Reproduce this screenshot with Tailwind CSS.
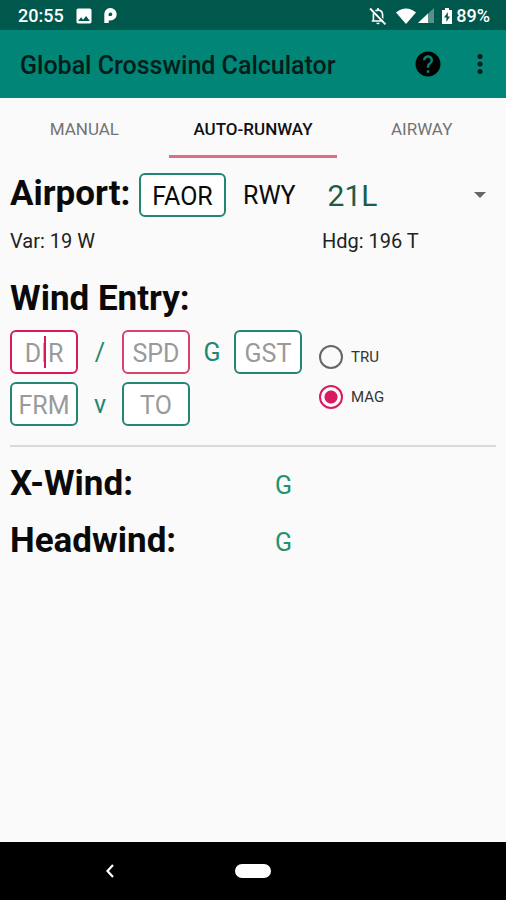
<!DOCTYPE html>
<html lang="en">
<head>
<meta charset="utf-8">
<meta name="viewport" content="width=device-width, initial-scale=1">
<title>Global Crosswind Calculator</title>
<script src="https://cdn.jsdelivr.net/npm/@tailwindcss/browser@4"></script>
</head>
<body class="min-h-screen flex flex-col bg-[#fafafa] text-[#0a0a0a] font-['Roboto',sans-serif]">
  <div class="h-[30px] shrink-0 bg-[#00574b] text-white flex items-center pl-[18px] pr-4 pt-0.5 text-lg font-medium">
    <span>20:55</span>
    <svg class="ml-2.5 size-5" viewBox="0 0 24 24" fill="currentColor" aria-hidden="true"><path d="M21 19V5c0-1.100-.9-2-2-2H5c-1.100 0-2 .9-2 2v14c0 1.100.9 2 2 2h14c1.100 0 2-.9 2-2zM8.500 13.500l2.500 3 3.500-4.500 4.500 6H5l3.500-4.500z"/></svg>
    <svg class="ml-2.5 h-4 w-[13px]" viewBox="0 0 13 16" aria-hidden="true"><path d="M2.500 15V6.500A4 4 0 1 1 6.500 10.200H4" fill="none" stroke="currentColor" stroke-width="4.400"/></svg>
    <svg class="ml-auto size-5" viewBox="0 0 24 24" aria-hidden="true"><path d="M6.500 18.500V10.500c0-3 2-5 5.500-5.500s5.500 2.500 5.500 5.500v8M4.500 18h14M12 2.500v3" fill="none" stroke="currentColor" stroke-width="2"/><path d="M10 20h4a2 2 0 0 1-4 0z" fill="currentColor"/><path d="M4.500 2.500l18 19" stroke="#00574b" stroke-width="2"/><path d="M2.500 3l18.500 19" stroke="currentColor" stroke-width="2.200"/></svg>
    <svg class="ml-2 h-4 w-5" viewBox="0 0 20 16" fill="currentColor" aria-hidden="true"><path d="M0 4.500Q10-3.500 20 4.500L10 16z"/></svg>
    <svg class="ml-0.5 size-4" viewBox="0 0 16 16" fill="currentColor" aria-hidden="true"><path d="M16 0v15H0z" opacity=".35"/><path d="M10 5.600V15H0z"/></svg>
    <svg class="ml-2 h-4 w-2.5" viewBox="0 0 10 16" aria-hidden="true"><path d="M3 0h4v2h3v14H0V2h3z" fill="currentColor"/><path d="M5.800 4L2 9.500h2.400V14L8 8.500H5.800z" fill="#00574b"/></svg>
    <span class="ml-1">89%</span>
  </div>

  <header class="h-[68px] shrink-0 bg-[#008577] flex items-center pl-5 pr-3.5 pt-1">
    <h1 class="text-[25px] font-medium text-[#001d19]">Global Crosswind Calculator</h1>
    <button type="button" aria-label="Help" class="ml-auto -mt-1"><svg class="size-[30px]" viewBox="0 0 24 24" aria-hidden="true"><path fill="#000" d="M12 2C6.480 2 2 6.480 2 12s4.480 10 10 10 10-4.480 10-10S17.520 2 12 2zm1 17h-2v-2h2v2zm2.070-7.750l-.9.920C13.450 12.900 13 13.500 13 15h-2v-.5c0-1.100.45-2.100 1.170-2.830l1.240-1.260c.37-.36.59-.86.59-1.410 0-1.100-.9-2-2-2s-2 .9-2 2H8c0-2.210 1.790-4 4-4s4 1.790 4 4c0 .88-.36 1.680-.93 2.250z"/></svg></button>
    <button type="button" aria-label="More options" class="ml-[25px] -mt-1"><svg class="h-6 w-6" viewBox="0 0 24 24" fill="#001d19" aria-hidden="true"><circle cx="12" cy="4.500" r="2.500"/><circle cx="12" cy="12" r="2.500"/><circle cx="12" cy="19.500" r="2.500"/></svg></button>
  </header>

  <nav class="grid grid-cols-3 h-[60px] shrink-0 text-[17px] text-[#737373]">
    <a href="#manual" class="flex items-center justify-center pt-1.5 border-b-3 border-transparent">MANUAL</a>
    <a href="#auto" aria-current="page" class="flex items-center justify-center pt-1.5 border-b-3 border-[#df6d86] font-medium text-[#111]">AUTO-RUNWAY</a>
    <a href="#airway" class="flex items-center justify-center pt-1.5 border-b-3 border-transparent">AIRWAY</a>
  </nav>

  <main class="grow px-2.5 pt-[15px]">
    <div class="flex items-center">
      <label for="airport" class="w-[129px] text-[35px] leading-10 font-bold pb-0.5">Airport:</label>
      <input id="airport" value="FAOR" class="w-[87px] h-11 pt-0.5 border-2 border-[#238672] rounded-md bg-white text-center text-[25px]">
      <label for="rwy" class="ml-[17px] pt-0.5 text-[25px]">RWY</label>
      <div class="relative grow ml-8">
        <select id="rwy" class="w-full h-11 pt-0.5 appearance-none bg-transparent text-[30px] leading-10 text-[#1c5c4a]"><option>21L</option></select>
        <svg class="absolute right-2.5 top-[19px] w-3 h-1.5 pointer-events-none" viewBox="0 0 12 6" fill="#666" aria-hidden="true"><path d="M0 0h12L6 6z"/></svg>
      </div>
    </div>
    <div class="grid grid-cols-[312px_1fr] mt-3 text-xl leading-6 text-[#222]">
      <span>Var: 19 W</span>
      <span>Hdg: 196 T</span>
    </div>

    <h2 class="mt-[26px] text-[35px] leading-10 font-bold">Wind Entry:</h2>
    <div class="mt-[11px] flex">
      <div class="grid grid-cols-[68px_44px_68px_44px_68px] gap-y-2 items-center justify-items-center text-[25px] text-[#238672]">
        <div class="relative">
          <input aria-label="Wind direction" placeholder="DIR" class="block w-[68px] h-11 pt-0.5 border-2 border-[#d81b60] rounded-md bg-white text-center placeholder:text-[#9a9a9a]">
          <span class="absolute left-[34px] top-1.5 w-0.5 h-8 bg-[#d81b60]"></span>
        </div>
        <span class="pt-0.5">/</span>
        <input aria-label="Wind speed" placeholder="SPD" class="w-[68px] h-11 pt-0.5 border-2 border-[#d9436f] rounded-md bg-white text-center placeholder:text-[#9a9a9a]">
        <span class="pt-0.5">G</span>
        <input aria-label="Gust" placeholder="GST" class="w-[68px] h-11 pt-0.5 border-2 border-[#238672] rounded-md bg-white text-center placeholder:text-[#9a9a9a]">
        <input aria-label="Variable from" placeholder="FRM" class="w-[68px] h-11 pt-0.5 border-2 border-[#238672] rounded-md bg-white text-center placeholder:text-[#9a9a9a]">
        <span class="pt-0.5">v</span>
        <input aria-label="Variable to" placeholder="TO" class="w-[68px] h-11 pt-0.5 border-2 border-[#238672] rounded-md bg-white text-center placeholder:text-[#9a9a9a]">
      </div>
      <fieldset class="ml-[17px] pt-[15px] flex flex-col gap-4 text-[15px] text-[#333]">
        <label class="flex items-center gap-2 h-6"><input type="radio" name="ref" class="appearance-none size-6 rounded-full border-2 border-[#666] checked:border-[#d81b60] checked:bg-[radial-gradient(circle,#d81b60_6px,transparent_7px)]">TRU</label>
        <label class="flex items-center gap-2 h-6"><input type="radio" name="ref" checked class="appearance-none size-6 rounded-full border-2 border-[#666] checked:border-[#d81b60] checked:bg-[radial-gradient(circle,#d81b60_6px,transparent_7px)]">MAG</label>
      </fieldset>
    </div>

    <hr class="mt-[19px] border-t-2 border-[#dadada]">

    <div class="mt-[17px] grid grid-cols-[265px_1fr] gap-y-[17px] items-center">
      <h2 class="text-[35px] leading-10 font-bold">X-Wind:</h2>
      <span class="pt-1 text-[25px] leading-9 text-[#23936f]">G</span>
      <h2 class="text-[35px] leading-10 font-bold">Headwind:</h2>
      <span class="pt-1 text-[25px] leading-9 text-[#23936f]">G</span>
    </div>
  </main>

  <footer class="h-[58px] shrink-0 bg-black grid grid-cols-[1fr_36px_1fr] items-center">
    <button type="button" aria-label="Back" class="justify-self-center -translate-x-2"><svg class="w-2 h-3.5" viewBox="0 0 8 14" fill="none" stroke="#fff" stroke-width="2.200" aria-hidden="true"><path d="M7 1L1.500 7 7 13"/></svg></button>
    <button type="button" aria-label="Home" class="h-3.5 rounded-full bg-white"></button>
  </footer>
</body>
</html>
